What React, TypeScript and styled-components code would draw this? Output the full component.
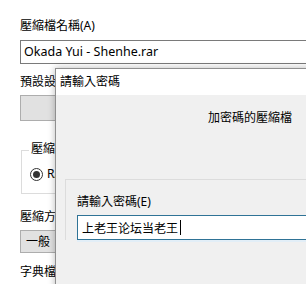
import React from "react";
import styled, { createGlobalStyle } from "styled-components";

const Global = createGlobalStyle`
  html, body { margin: 0; padding: 0; background: #ffffff; }
  body { font-family: "Noto Sans", "Noto Sans CJK TC", sans-serif; font-size: 12px; color: #000; }
`;

const Screen = styled.div`
  position: relative;
  width: 306px;
  height: 284px;
  overflow: hidden;
  background: #ffffff;
`;

const Form = styled.div`
  display: flex;
  flex-direction: column;
  padding: 18px 0 0 20px;
`;

const Label = styled.div<{ $gap?: number; $top?: number }>`
  height: 16px;
  line-height: 16px;
  white-space: nowrap;
  margin-top: ${(p) => p.$top ?? 0}px;
  margin-bottom: ${(p) => p.$gap ?? 5}px;
`;

const TextBox = styled.div`
  box-sizing: border-box;
  width: 320px;
  height: 24px;
  border: 1px solid #7a7a7a;
  background: #fff;
  padding-left: 3px;
  line-height: 22px;
  font-size: 12.5px;
  white-space: nowrap;
`;

const GrayBox = styled.div<{ $h: number }>`
  box-sizing: border-box;
  width: 320px;
  height: ${(p) => p.$h}px;
  background: #e1e1e1;
  border: 1px solid #adadad;
  padding-left: 5px;
  line-height: ${(p) => p.$h - 2}px;
  white-space: nowrap;
`;

const GroupBox = styled.div`
  position: relative;
  box-sizing: border-box;
  margin: 29px 0 0 1px;
  width: 320px;
  height: 44px;
  border: 1px solid #dcdcdc;
  display: flex;
  align-items: center;
  padding: 4px 0 0 8px;
`;

const Legend = styled.span`
  position: absolute;
  top: -10px;
  left: 7px;
  padding: 0 2px;
  background: #fff;
  line-height: 16px;
  white-space: nowrap;
`;

const Radio = styled.span`
  box-sizing: border-box;
  width: 13px;
  height: 13px;
  border: 1px solid #333;
  border-radius: 50%;
  display: inline-flex;
  align-items: center;
  justify-content: center;
  margin-right: 4px;
  &::after {
    content: "";
    width: 7px;
    height: 7px;
    border-radius: 50%;
    background: #333;
  }
`;

const RadioRow = styled.div`
  display: flex;
  align-items: center;
  line-height: 16px;
`;

const Dialog = styled.div`
  position: absolute;
  left: 55px;
  top: 68px;
  width: 300px;
  height: 260px;
  border: 1px solid #8f8f8f;
  background: #f0f0f0;
  box-shadow: 0 0 7px rgba(0, 0, 0, 0.28);
  display: flex;
  flex-direction: column;
`;

const TitleBar = styled.div`
  height: 26px;
  background: #fff;
  padding-left: 4px;
  line-height: 26px;
  white-space: nowrap;
`;

const Body = styled.div`
  display: flex;
  flex-direction: column;
  padding-top: 15px;
`;

const Info = styled.div`
  margin-left: 152px;
  line-height: 16px;
  white-space: nowrap;
`;

const Frame = styled.div`
  margin: 53px 0 0 9px;
  border-top: 1px solid #dcdcdc;
  border-left: 1px solid #dcdcdc;
  padding: 14px 0 0 11px;
  display: flex;
  flex-direction: column;
`;

const PasswordBox = styled.div`
  box-sizing: border-box;
  width: 260px;
  height: 25px;
  border: 1px solid #2f7396;
  background: #fff;
  box-shadow: 0 2px 0 #e2eef7;
  padding-left: 4px;
  display: flex;
  align-items: center;
  white-space: nowrap;
`;

const Caret = styled.span`
  display: inline-block;
  width: 1px;
  height: 15px;
  background: #000;
  margin-left: 2px;
`;

export default function App() {
  return (
    <Screen>
      <Global />
      <Form>
        <Label $gap={6}>壓縮檔名稱(A)</Label>
        <TextBox>Okada Yui - Shenhe.rar</TextBox>
        <Label $top={10}>預設設定檔</Label>
        <GrayBox $h={26} />
        <GroupBox>
          <Legend>壓縮檔格式</Legend>
          <RadioRow>
            <Radio />
            RAR
          </RadioRow>
        </GroupBox>
        <Label $top={15}>壓縮方式(C)</Label>
        <GrayBox $h={23}>一般</GrayBox>
        <Label $top={11}>字典檔大小(I)</Label>
      </Form>
      <Dialog>
        <TitleBar>請輸入密碼</TitleBar>
        <Body>
          <Info>加密碼的壓縮檔</Info>
          <Frame>
            <Label>請輸入密碼(E)</Label>
            <PasswordBox>
              上老王论坛当老王
              <Caret />
            </PasswordBox>
          </Frame>
        </Body>
      </Dialog>
    </Screen>
  );
}
